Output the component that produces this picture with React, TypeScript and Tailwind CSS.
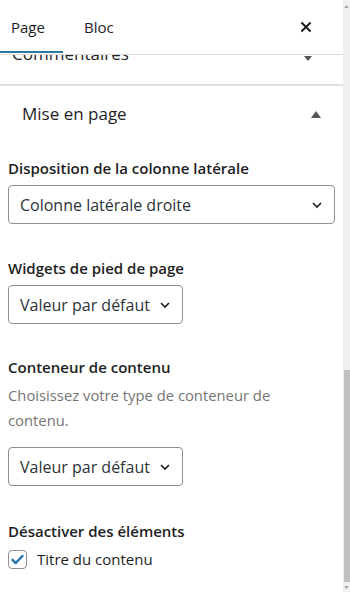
import React from 'react';

const font = { fontFamily: '"Open Sans", "Noto Sans", sans-serif' };

const Chevron: React.FC<{ className?: string }> = ({ className }) => (
  <svg viewBox="0 0 24 24" className={className} fill="none" stroke="currentColor" strokeWidth={2.4}>
    <path d="M6 9l6 6 6-6" />
  </svg>
);

const SelectBox: React.FC<{ value: string; wide?: boolean }> = ({ value, wide }) => (
  <div
    className={`flex items-center justify-between h-[39px] border border-[#8c8f94] rounded-[4px] pl-[11px] pr-[9px] text-[16px] text-[#2c3338] ${wide ? 'w-[327px]' : 'w-[175px]'}`}
  >
    <span className="whitespace-nowrap">{value}</span>
    <Chevron className="w-[16px] h-[16px] text-[#1e1e1e]" />
  </div>
);

const Label: React.FC<{ children: React.ReactNode }> = ({ children }) => (
  <div className="text-[15px] font-semibold text-[#1e1e1e] leading-[20px]">{children}</div>
);

export default function App() {
  return (
    <div className="w-[350px] h-[592px] flex bg-white overflow-hidden" style={font}>
      <div className="flex-1 flex flex-col relative">
        <div className="h-[55px] flex items-center border-b border-[#dcdcdc] bg-white relative z-10">
          <div className="relative h-full flex items-center px-[11px] text-[15px] text-[#1e1e1e]">
            Page
            <div className="absolute left-0 right-[-7px] bottom-[1px] h-[2px] bg-[#2a7aa0]" />
          </div>
          <div className="ml-[28px] text-[15px] text-[#1e1e1e]">Bloc</div>
          <svg viewBox="0 0 24 24" className="ml-auto mr-[26px] w-[22px] h-[22px] text-[#1e1e1e]" fill="none" stroke="currentColor" strokeWidth={2.2}>
            <path d="M7 7l10 10M17 7L7 17" />
          </svg>
        </div>
        <div className="h-[31px] overflow-hidden border-b-[2px] border-[#e0e0e0]">
          <div className="flex items-center justify-between pl-[12px] pr-[31px] -mt-[13px] h-[24px] text-[17px] text-[#1e1e1e]">
            <span>Commentaires</span>
            <svg viewBox="0 0 10 6" className="w-[8px] h-[5px] mt-[8px] text-[#555]"><path d="M0 0h10L5 6z" fill="currentColor" /></svg>
          </div>
        </div>
        <div className="flex items-center justify-between h-[56px] pl-[22px] pr-[22px] text-[17px] text-[#1e1e1e]">
          <span>Mise en page</span>
          <svg viewBox="0 0 10 7" className="w-[10px] h-[7px] text-[#555]"><path d="M5 0L10 7H0z" fill="currentColor" /></svg>
        </div>
        <div className="flex flex-col px-[8px] pt-[16px]">
          <Label>Disposition de la colonne latérale</Label>
          <div className="mt-[7px]"><SelectBox value="Colonne latérale droite" wide /></div>
          <div className="mt-[34px]"><Label>Widgets de pied de page</Label></div>
          <div className="mt-[7px]"><SelectBox value="Valeur par défaut" /></div>
          <div className="mt-[33px]"><Label>Conteneur de contenu</Label></div>
          <div className="mt-[6px] text-[14.8px] leading-[25px] text-[#757575] pr-[40px]">
            Choisissez votre type de conteneur de contenu.
          </div>
          <div className="mt-[14px]"><SelectBox value="Valeur par défaut" /></div>
          <div className="mt-[35px]"><Label>Désactiver des éléments</Label></div>
          <div className="mt-[7px] flex items-center gap-[10px]">
            <div className="w-[19px] h-[19px] border border-[#8c8f94] rounded-[4px] flex items-center justify-center">
              <svg viewBox="0 0 24 24" className="w-[17px] h-[17px] text-[#2271b1]" fill="none" stroke="currentColor" strokeWidth={3.4} strokeLinecap="round" strokeLinejoin="round">
                <path d="M5 12.5l4.5 4.5L19 7" />
              </svg>
            </div>
            <span className="text-[15px] text-[#1e1e1e]">Titre du contenu</span>
          </div>
        </div>
      </div>
      <div className="w-[8px] bg-[#f0f0f0] flex flex-col items-center">
        <div className="h-[12px] flex items-center justify-center">
          <svg viewBox="0 0 6 4" className="w-[5px] h-[3px] text-[#a3a3a3]"><path d="M3 0L6 4H0z" fill="currentColor" /></svg>
        </div>
        <div className="flex-1" />
        <div className="w-[6px] h-[212px] bg-[#c1c1c1]" />
        <div className="h-[10px] flex items-center justify-center">
          <svg viewBox="0 0 6 4" className="w-[5px] h-[3px] text-[#a3a3a3]"><path d="M0 0h6L3 4z" fill="currentColor" /></svg>
        </div>
      </div>
    </div>
  );
}
